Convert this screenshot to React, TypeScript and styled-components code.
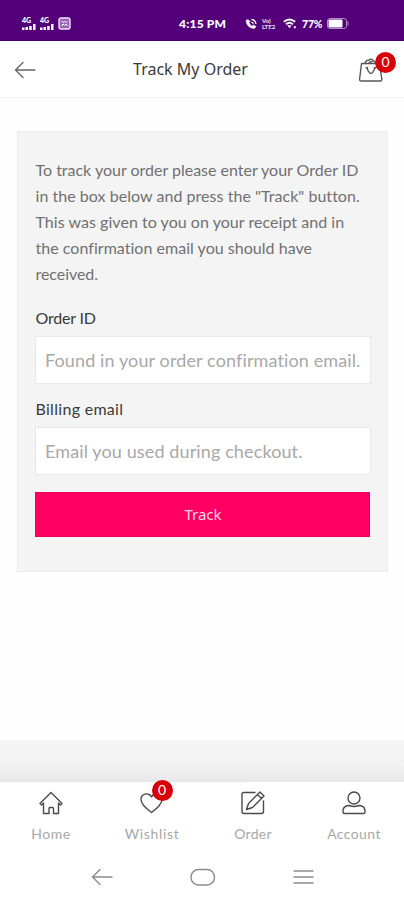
import React from 'react';
import styled, { createGlobalStyle } from 'styled-components';

const GlobalStyle = createGlobalStyle`
  * { box-sizing: border-box; }
  body { margin: 0; background: #fff; font-family: Lato, "Noto Sans", sans-serif; }
`;

const Screen = styled.div`
  width: 404px;
  height: 900px;
  display: flex;
  flex-direction: column;
  background: #fefefe;
  overflow: hidden;
`;

const StatusBar = styled.div`
  height: 41px;
  flex: none;
  display: grid;
  grid-template-columns: 157px 66px 1fr;
  align-items: center;
  padding: 7px 0 0 22px;
  background: #54007b;
  border-bottom: 1px solid #430068;
  color: #fff;
`;

const StatusGroup = styled.div<{ $gap: number }>`
  display: flex;
  align-items: center;
  gap: ${(p) => p.$gap}px;
`;

const Clock = styled.span`
  font: 900 12px/14px Lato, sans-serif;
  letter-spacing: 0.2px;
  white-space: nowrap;
`;

const Signal = styled.span`
  display: flex;
  flex-direction: column;
  align-items: flex-start;
  width: 14px;
  font: 900 7px/7px Lato, sans-serif;
`;

const Bars = styled.svg`
  display: block;
  width: 14px;
  height: 6px;
`;

const DataRate = styled.span`
  font: 700 6px/5.5px Lato, sans-serif;
  width: 16px;
  white-space: pre;
  opacity: 0.9;
`;

const Percent = styled.span`
  font: 900 10.5px/12px Lato, sans-serif;
  letter-spacing: -0.2px;
`;

const Header = styled.header`
  height: 57px;
  flex: none;
  display: grid;
  grid-template-columns: 60px 1fr 60px;
  align-items: center;
  border-bottom: 1px solid #f2f2f2;
  background: #fff;
`;

const BackButton = styled.button`
  border: 0;
  padding: 1px 0 0 14px;
  background: none;
  display: flex;
`;

const Title = styled.h1`
  margin: 0;
  padding-right: 23px;
  text-align: center;
  font: 400 16px/22px "Noto Sans", sans-serif;
  color: #3a3a3a;
`;

const IconWithBadge = styled.span`
  position: relative;
  display: flex;
  width: 26px;
  height: 26px;
`;

const CartIcon = styled(IconWithBadge)`
  margin: 1px 0 0 14px;
`;

const Badge = styled.span<{ $top: number; $left: number }>`
  position: absolute;
  top: ${(p) => p.$top}px;
  left: ${(p) => p.$left}px;
  width: 21px;
  height: 21px;
  border-radius: 50%;
  background: #d80009;
  color: #fff;
  text-align: center;
  font: 400 14px/20px Lato, sans-serif;
`;

const Main = styled.main`
  flex: 1;
  padding: 33px 16px 0 17px;
`;

const Card = styled.form`
  height: 441px;
  padding: 25px 17px 0 17px;
  display: flex;
  flex-direction: column;
  background: #f4f4f4;
  border: 1px solid #ececec;
`;

const Intro = styled.p`
  margin: 0 -4px 20px 0;
  padding-left: 0.5px;
  font-size: 16px;
  line-height: 26px;
  color: #707070;
`;

const Line = styled.span<{ $spacing: number }>`
  display: block;
  white-space: nowrap;
  letter-spacing: ${(p) => p.$spacing}px;
`;

const Field = styled.label<{ $spacing: number }>`
  display: flex;
  flex-direction: column;
  margin-bottom: 14px;
  font-size: 16px;
  line-height: 22px;
  letter-spacing: ${(p) => p.$spacing}px;
  color: #3a3a3a;
`;

const FieldName = styled.span`
  padding-left: 0.5px;
`;

const Input = styled.input`
  height: 48px;
  width: 336px;
  margin-top: 7px;
  padding: 0 0 1px 9px;
  border: 1px solid #e8e8e8;
  border-radius: 0;
  background: #fff;
  outline: 0;
  font: 400 18px/24px Lato, sans-serif;
  letter-spacing: 0.12px;
  &::placeholder { color: #a8a8a8; opacity: 1; }
`;

const TrackButton = styled.button`
  height: 45px;
  width: 335px;
  flex: none;
  margin-top: 3px;
  padding: 0 0 1px 1px;
  border: 1px solid #ec0060;
  background: #ff0062;
  color: #ffd9e8;
  font: 400 15px/20px "Noto Sans", sans-serif;
`;

const PageFooter = styled.div`
  height: 42px;
  flex: none;
  background: linear-gradient(#f5f5f5, #f2f2f2 60%, #e8e8e8);
`;

const TabBar = styled.nav`
  height: 65px;
  flex: none;
  display: grid;
  grid-template-columns: repeat(4, 101px);
  background: #fff;
`;

const Tab = styled.a`
  display: flex;
  flex-direction: column;
  align-items: center;
  padding-top: 8px;
  color: #4a4a4a;
`;

const TabLabel = styled.span<{ $spacing: number }>`
  margin-top: 8px;
  padding-left: 1px;
  font-size: 14px;
  line-height: 20px;
  letter-spacing: ${(p) => p.$spacing}px;
  color: #a8a8a8;
`;

const SystemNav = styled.div`
  height: 53px;
  flex: none;
  display: flex;
  justify-content: center;
  align-items: flex-start;
  gap: 77px;
  padding: 21px 0 0 2px;
  background: #fff;
`;

const Stroke = styled.svg<{ $color?: string }>`
  display: block;
  flex: none;
  fill: none;
  stroke: ${(p) => p.$color ?? 'currentColor'};
  stroke-width: 1.4;
  stroke-linejoin: round;
  stroke-linecap: round;
`;

const introLines = [
  { text: 'To track your order please enter your Order ID', spacing: -0.01 },
  { text: 'in the box below and press the "Track" button.', spacing: 0.04 },
  { text: 'This was given to you on your receipt and in', spacing: 0.04 },
  { text: 'the confirmation email you should have', spacing: 0.03 },
  { text: 'received.', spacing: -0.05 },
];

const SignalIcon = () => (
  <Signal>
    4G
    <Bars viewBox="0 0 14 6" fill="#fff">
      <path d="M0 3.5h2.5V6H0zM3.5 3h2.5v3h-2.5zM7.2 2h2.5v4H7.2zM11 0h2.5v6H11z" />
    </Bars>
  </Signal>
);

const ArrowIcon = ({ width, color }: { width: number; color: string }) => (
  <Stroke width={width} height={18} viewBox={`0 0 ${width} 18`} $color={color}>
    <path d={`M${width - 1} 9H1.5M9 1.5L1.5 9L9 16.5`} />
  </Stroke>
);

const BagIcon = () => (
  <Stroke width="26" height="26" viewBox="0 0 26 26" $color="#555">
    <path d="M3.5 6.5H21.5L23.8 22Q24 24 22 24H3.5Q1.5 24 1.6 22Z" />
    <path d="M7 6.5Q8 2.5 11 3.2Q12.5 1.2 15 3.2L18 6M11 6Q11.5 4.5 14 4.8M8.8 10.8Q11 16.5 12.8 16.5Q14.8 16.5 17 10.8" />
    <path d="M8.2 10.8H9.6M16.2 10.8H17.6" />
  </Stroke>
);

const HomeIcon = () => (
  <Stroke width="26" height="26" viewBox="0 0 26 26">
    <path d="M2 13.5L13 2.5L24 13.5L22.5 15L20.5 13V23.5H15.5V18.5Q15.5 17.5 14.5 17.5H12Q11 17.5 11 18.5V23.5H5.5V13L3.5 15Z" />
  </Stroke>
);

const HeartIcon = () => (
  <Stroke width="26" height="26" viewBox="0 0 26 26">
    <path d="M12.5 22.5C7 18.5 2 14 2 9.5C2 3.5 9.5 2 12.5 6.8C15.5 2 23 3.5 23 9.5C23 14 18 18.5 12.5 22.5Z" />
  </Stroke>
);

const OrderIcon = () => (
  <Stroke width="26" height="26" viewBox="0 0 26 26">
    <path d="M15 2.5H4Q2 2.5 2 4.5V21.5Q2 23.5 4 23.5H21.5Q23.5 23.5 23.5 21.5V11" />
    <path d="M6.5 19.5L8.5 13.5L20 2L24 6L12.5 17.5ZM17.5 4.5L21.5 8.5" />
  </Stroke>
);

const AccountIcon = () => (
  <Stroke width="26" height="26" viewBox="0 0 26 26">
    <circle cx="13" cy="8" r="6" />
    <path d="M2 22V20Q3 15.5 8.5 15.5Q13 17.5 17.5 15.5Q23 15.5 24 20V22Q24 23.5 22.5 23.5H3.5Q2 23.5 2 22Z" />
  </Stroke>
);

export default function App() {
  return (
    <>
      <GlobalStyle />
      <Screen>
        <StatusBar>
          <StatusGroup $gap={4}>
            <SignalIcon />
            <SignalIcon />
            <svg width="13" height="13" viewBox="0 0 13 13">
              <rect x="1" y="1" width="11" height="11" rx="2" fill="#9a64b5" stroke="#f0e2f7" strokeWidth="1.4" />
              <path d="M3.5 4L5 5.5L6.5 4.5L8 5.5L9.5 4M3.5 9L5 7L6.5 8.5L8 7L9.5 9" fill="none" stroke="#fff" />
            </svg>
          </StatusGroup>
          <Clock>4:15 PM</Clock>
          <StatusGroup $gap={5}>
            <svg width="12" height="12" viewBox="0 0 12 12" fill="none" stroke="#fff">
              <path d="M1 2.5C1.5 7.5 5 10.5 9.5 10.5L11 8.5L8.5 7L7 8.2Q5 7 4 4.8L5 3.5L3 1.5Z" fill="#fff" strokeWidth=".5" />
              <path d="M6.5 1.5Q10.5 1.8 11 6M6.5 4L8.5 5.5" strokeWidth="1.3" />
            </svg>
            <DataRate>{'Vo)\nLTE2'}</DataRate>
            <svg width="14" height="11" viewBox="0 0 14 11" fill="none" stroke="#fff" strokeWidth="1.9">
              <path d="M.8 3.8Q6.5-1 12.2 3.8M3 6.2Q6.5 3.4 10 6.2" />
              <path d="M4.8 7.5H8.2L6.5 10ZM11 8.5h1.5v1.5h-1.5z" fill="#fff" strokeWidth=".5" />
            </svg>
            <Percent>77%</Percent>
            <svg width="22" height="11" viewBox="0 0 22 11">
              <rect x=".5" y=".5" width="19" height="10" rx="2.5" fill="none" stroke="#b48bc8" />
              <rect x="1.5" y="1.5" width="14" height="8" rx="1" fill="#fff" />
              <path d="M21 3.5V7.5" stroke="#b48bc8" />
            </svg>
          </StatusGroup>
        </StatusBar>
        <Header>
          <BackButton aria-label="Back">
            <ArrowIcon width={22} color="#666" />
          </BackButton>
          <Title>Track My Order</Title>
          <CartIcon>
            <BagIcon />
            <Badge $top={-5} $left={17}>0</Badge>
          </CartIcon>
        </Header>
        <Main>
          <Card>
            <Intro>
              {introLines.map((line) => (
                <Line key={line.text} $spacing={line.spacing}>{line.text}</Line>
              ))}
            </Intro>
            <Field $spacing={-0.2}>
              <FieldName>Order ID</FieldName>
              <Input placeholder="Found in your order confirmation email." />
            </Field>
            <Field $spacing={0.3}>
              <FieldName>Billing email</FieldName>
              <Input placeholder="Email you used during checkout." />
            </Field>
            <TrackButton type="button">Track</TrackButton>
          </Card>
        </Main>
        <PageFooter />
        <TabBar>
          <Tab>
            <HomeIcon />
            <TabLabel $spacing={0.5}>Home</TabLabel>
          </Tab>
          <Tab>
            <IconWithBadge>
              <HeartIcon />
              <Badge $top={-10} $left={13}>0</Badge>
            </IconWithBadge>
            <TabLabel $spacing={0.65}>Wishlist</TabLabel>
          </Tab>
          <Tab>
            <OrderIcon />
            <TabLabel $spacing={0.3}>Order</TabLabel>
          </Tab>
          <Tab>
            <AccountIcon />
            <TabLabel $spacing={0.4}>Account</TabLabel>
          </Tab>
        </TabBar>
        <SystemNav>
          <ArrowIcon width={22} color="#8c8c8c" />
          <Stroke width="26" height="19" viewBox="0 0 26 19" $color="#8c8c8c">
            <rect x="1" y="1.5" width="23.5" height="15.5" rx="7.5" />
          </Stroke>
          <Stroke width="22" height="18" viewBox="0 0 22 18" $color="#8c8c8c">
            <path d="M1 3H20M1 9H20M1 15H20" />
          </Stroke>
        </SystemNav>
      </Screen>
    </>
  );
}
